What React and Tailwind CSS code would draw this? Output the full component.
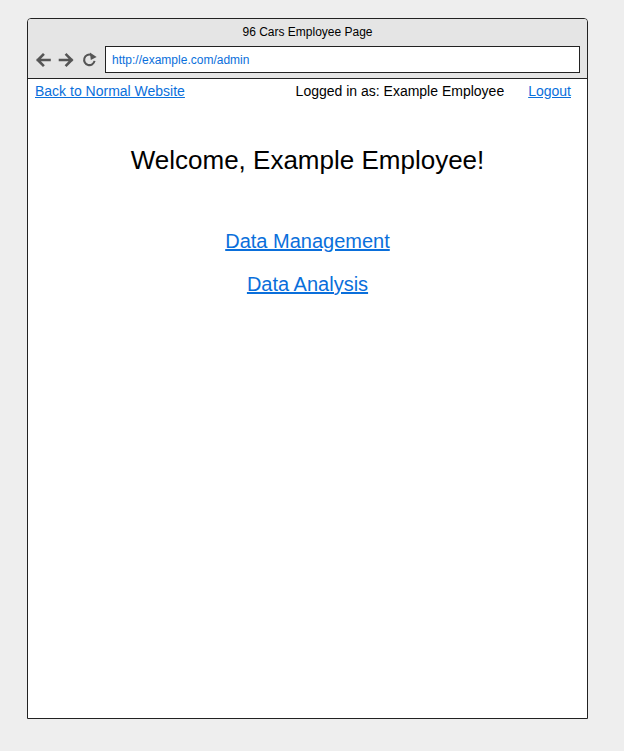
export default function App() {
  return (
    <div className="min-h-[751px] bg-[#eeeeee] pl-[27px] pt-[18px] font-['Liberation_Sans',Arial,sans-serif]">
      <div className="flex h-[701px] w-[561px] flex-col overflow-hidden rounded-t-[4px] border border-[#222] bg-white">
        <div className="h-[60px] shrink-0 border-b border-[#222] bg-[#e5e5e5]">
          <p className="pt-[6px] text-center text-[12px] leading-[14px] text-black">96 Cars Employee Page</p>
          <div className="mt-[7px] flex items-center pl-[7px] pr-[7px]">
            <div className="flex w-[70px] items-center gap-[7px] text-[#555]">
              <svg width="16" height="16" viewBox="0 0 16 16" fill="none" stroke="currentColor" strokeWidth="2.6" strokeLinecap="square">
                <path d="M14.5 8H3M8 2.8L2.8 8L8 13.2" />
              </svg>
              <svg width="17" height="16" viewBox="0 0 16 16" fill="none" stroke="currentColor" strokeWidth="2.6" strokeLinecap="square">
                <path d="M1.5 8H13M8 2.8L13.2 8L8 13.2" />
              </svg>
              <svg width="15" height="15" viewBox="0 0 16 16" fill="none" stroke="currentColor" strokeWidth="2.2">
                <path d="M13.4 9.5A5.6 5.6 0 1 1 9.8 3.1" />
                <path d="M8.4 0.6L15.6 5.2L9.4 8.4Z" fill="currentColor" stroke="none" />
              </svg>
            </div>
            <div className="flex h-[27px] flex-1 items-center border border-[#222] bg-white pl-[6px] text-[12px] text-[#0a6fdb]">
              http://example.com/admin
            </div>
          </div>
        </div>
        <div className="flex items-center pl-[7px] pr-[16px] pt-[4px] text-[14px] leading-[16px]">
          <a href="#" className="text-[#0a6fdb] underline">Back to Normal Website</a>
          <span className="ml-auto text-black">Logged in as: Example Employee</span>
          <a href="#" className="ml-[24px] text-[#0a6fdb] underline">Logout</a>
        </div>
        <h1 className="mt-[46px] text-center text-[26px] leading-[30px] text-black">Welcome, Example Employee!</h1>
        <div className="mt-[55px] flex flex-col items-center gap-[20px] text-[20px] leading-[23px]">
          <a href="#" className="text-[#0a6fdb] underline">Data Management</a>
          <a href="#" className="text-[#0a6fdb] underline">Data Analysis</a>
        </div>
      </div>
    </div>
  );
}
